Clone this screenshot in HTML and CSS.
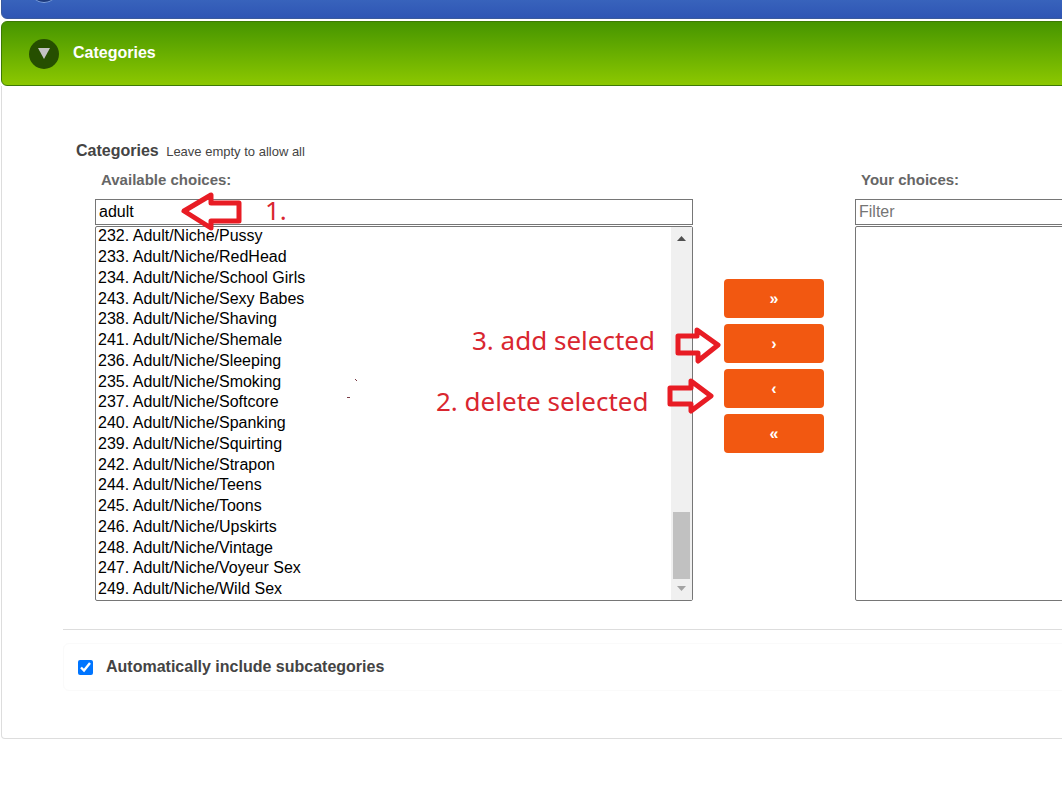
FILE: index.html
```
<!DOCTYPE html>
<html lang="en">
<head>
  <meta charset="UTF-8">
  <title>Categories</title>
  <link rel="stylesheet" href="styles.css">
</head>
<body>
  <main class="page">
    <div class="bar bar-blue">
      <span class="toggle"></span>
    </div>

    <button type="button" class="bar bar-green">
      <span class="toggle">
        <svg width="12" height="11" viewBox="0 0 12 11"><path d="M0 0H12L6 11Z" fill="#c4c4c4"/></svg>
      </span>
      <span class="bar-title">Categories</span>
    </button>

    <section class="panel">
      <p class="heading"><strong>Categories</strong> <small>Leave empty to allow all</small></p>

      <div class="selector">
        <div class="column">
          <label for="available_filter">Available choices:</label>
          <input type="text" id="available_filter" class="filter" value="adult">
          <div class="listbox">
            <select id="available" multiple size="18" aria-label="Available choices">
              <option>232. Adult/Niche/Pussy</option>
              <option>233. Adult/Niche/RedHead</option>
              <option>234. Adult/Niche/School Girls</option>
              <option>243. Adult/Niche/Sexy Babes</option>
              <option>238. Adult/Niche/Shaving</option>
              <option>241. Adult/Niche/Shemale</option>
              <option>236. Adult/Niche/Sleeping</option>
              <option>235. Adult/Niche/Smoking</option>
              <option>237. Adult/Niche/Softcore</option>
              <option>240. Adult/Niche/Spanking</option>
              <option>239. Adult/Niche/Squirting</option>
              <option>242. Adult/Niche/Strapon</option>
              <option>244. Adult/Niche/Teens</option>
              <option>245. Adult/Niche/Toons</option>
              <option>246. Adult/Niche/Upskirts</option>
              <option>248. Adult/Niche/Vintage</option>
              <option>247. Adult/Niche/Voyeur Sex</option>
              <option>249. Adult/Niche/Wild Sex</option>
            </select>
            <div class="scrollbar">
              <svg width="9" height="5" viewBox="0 0 9 5"><path d="M0 5L4.500 0L9 5Z" fill="#505050"/></svg>
              <span class="thumb"></span>
              <svg width="9" height="5" viewBox="0 0 9 5"><path d="M0 0L4.500 5L9 0Z" fill="#a3a3a3"/></svg>
            </div>
          </div>
        </div>

        <div class="moves">
          <button type="button">»</button>
          <button type="button">›</button>
          <button type="button">‹</button>
          <button type="button">«</button>
        </div>

        <div class="column">
          <label for="chosen_filter">Your choices:</label>
          <input type="text" id="chosen_filter" class="filter" placeholder="Filter">
          <div class="listbox">
            <select id="chosen" multiple size="18" aria-label="Your choices"></select>
          </div>
        </div>

        <!-- Steps drawn over the form -->
        <svg class="steps" width="640" height="240" viewBox="0 0 640 240">
          <g class="arrows">
            <path d="M4 31L31 15V23H59V41H31V48Z"/>
            <path d="M498 156H517V150L538 165L518 181V173H498Z"/>
            <path d="M490 208H511V201L531 216L511 231V224H490Z"/>
          </g>
          <text x="85" y="40">1.</text>
          <text x="292" y="170">3. add selected</text>
          <text x="256" y="231">2. delete selected</text>
          <path d="M175 199h1v1h1v1h-1v-1h-1zM167 217h3v1h-3z" fill="#7a3a44"/>
        </svg>
      </div>

      <div class="subcategories">
        <input type="checkbox" id="subcategories" checked>
        <label for="subcategories">Automatically include subcategories</label>
      </div>
    </section>
  </main>
</body>
</html>
```
FILE: styles.css
```
* {
  box-sizing: border-box;
}
body {
  margin: 0;
  overflow: hidden;
  background: white;
  color: #444;
  font-family: "Liberation Sans", Arial, sans-serif;
  font-size: 16px;
}
button, input, select {
  font-family: inherit;
  font-size: 16px;
}
.page {
  min-width: 1548px;
  margin-top: -46px;
  padding: 0 1px;
}
.bar {
  display: flex;
  align-items: center;
  gap: 14px;
  width: 100%;
  height: 65px;
  margin: 0 0 2px;
  padding: 0 27px;
  border: 1px solid;
  border-radius: 6px;
  color: white;
}
.bar-blue {
  border-color: #3a5a9c;
  background: linear-gradient(#4f86cf, #2f55b4);
}
.bar-green {
  margin-bottom: 0;
  border-color: #3d7a05;
  background: linear-gradient(#469500, #8cc800);
  cursor: pointer;
}
.toggle {
  display: flex;
  align-items: center;
  justify-content: center;
  width: 30px;
  height: 30px;
  border-radius: 50%;
}
.bar-blue .toggle {
  height: 32px;
  background: #1d3a7c;
  border-bottom: 1px solid #7fa3e0;
}
.bar-green .toggle {
  background: #264f00;
}
.bar-title {
  font-weight: bold;
  padding-bottom: 1px;
}
.panel {
  padding: 53px 61px 47px;
  border: 1px solid #ddd;
  border-top: none;
  border-radius: 0 0 4px 4px;
}
.heading {
  margin: 0;
  padding: 0 13px;
  line-height: 24px;
}
.heading small {
  margin-left: 3px;
  font-size: 13px;
}
.selector {
  display: grid;
  grid-template-columns: 1fr 100px 1fr;
  gap: 31px;
  position: relative;
  padding: 6px 32px 28px;
  border-bottom: 1px solid #ddd;
}
.column {
  display: flex;
  flex-direction: column;
}
.column label {
  padding: 0 6px;
  color: #666;
  font-size: 15px;
  font-weight: bold;
  line-height: 20px;
}
.filter {
  height: 26px;
  margin: 9px 0 1px;
  padding: 0 3px;
  border: 1px solid #767676;
}
.filter::placeholder {
  color: #757575;
}
.listbox {
  display: flex;
  height: 375px;
  border: 1px solid #767676;
  border-radius: 2px;
  background: white;
}
.listbox select {
  flex: 1;
  height: 373px;
  padding: 0;
  border: none;
  overflow: hidden;
  background: none;
  color: black;
}
.listbox option {
  height: 21px;
  min-height: 0;
  padding: 0 2px;
  line-height: 20px;
}
.listbox option:nth-child(4n) {
  height: 20px;
}
.scrollbar {
  display: flex;
  flex-direction: column;
  align-items: center;
  width: 21px;
  padding: 9px 2px;
  background: #f0f0f0;
}
.thumb {
  width: 17px;
  height: 67px;
  margin: auto 0 7px;
  background: #c1c1c1;
}
.moves {
  display: flex;
  flex-direction: column;
  gap: 6px;
  padding-top: 109px;
}
.moves button {
  height: 39px;
  border: none;
  border-radius: 4px;
  background: #f25811;
  color: white;
  font-weight: bold;
  cursor: pointer;
}
.steps {
  position: absolute;
  top: 16px;
  left: 117px;
  pointer-events: none;
}
.steps text {
  fill: #d9262f;
  font-family: "Noto Sans", sans-serif;
  font-size: 26px;
}
.arrows path {
  fill: none;
  stroke: #e81c24;
  stroke-width: 5px;
  stroke-linejoin: round;
}
.subcategories {
  display: flex;
  align-items: center;
  gap: 13px;
  height: 48px;
  margin-top: 13px;
  padding: 0 14px;
  border: 1px solid #fafafa;
  border-radius: 6px;
}
.subcategories input {
  width: 15px;
  height: 15px;
  margin: 0;
  accent-color: #0075ff;
}
.subcategories label {
  font-weight: bold;
}
```
